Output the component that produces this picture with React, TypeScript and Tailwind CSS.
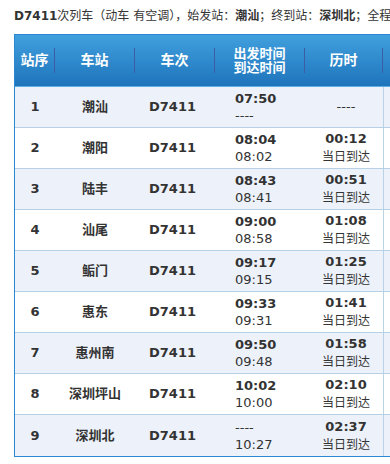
// Train timetable: D7411 stops
const FONT = { fontFamily: '"DejaVu Sans", "Noto Sans CJK SC", sans-serif' };

type Stop = {
  no: number;
  name: string;
  train: string;
  dep: string;
  arr: string;
  span: string;
  note?: string;
};

const stops: Stop[] = [
  { no: 1, name: '潮汕', train: 'D7411', dep: '07:50', arr: '----', span: '----' },
  { no: 2, name: '潮阳', train: 'D7411', dep: '08:04', arr: '08:02', span: '00:12', note: '当日到达' },
  { no: 3, name: '陆丰', train: 'D7411', dep: '08:43', arr: '08:41', span: '00:51', note: '当日到达' },
  { no: 4, name: '汕尾', train: 'D7411', dep: '09:00', arr: '08:58', span: '01:08', note: '当日到达' },
  { no: 5, name: '鲘门', train: 'D7411', dep: '09:17', arr: '09:15', span: '01:25', note: '当日到达' },
  { no: 6, name: '惠东', train: 'D7411', dep: '09:33', arr: '09:31', span: '01:41', note: '当日到达' },
  { no: 7, name: '惠州南', train: 'D7411', dep: '09:50', arr: '09:48', span: '01:58', note: '当日到达' },
  { no: 8, name: '深圳坪山', train: 'D7411', dep: '10:02', arr: '10:00', span: '02:10', note: '当日到达' },
  { no: 9, name: '深圳北', train: 'D7411', dep: '----', arr: '10:27', span: '02:37', note: '当日到达' },
];

function Divider() {
  return <div className="w-px h-[25px] bg-[#3c5ca4] shrink-0" />;
}

export default function App() {
  return (
    <div className="w-[390px] h-[464px] overflow-hidden bg-white text-[#333]" style={FONT}>
      {/* summary line */}
      <div className="h-[34px] w-[390px] overflow-hidden pl-[14px] pt-[7px] text-[12px] leading-[18px] whitespace-nowrap">
        <b>D7411</b>次列车（动车 有空调），始发站：<b>潮汕</b>；终到站：<b>深圳北</b>；全程
      </div>

      {/* table */}
      <div className="ml-[14px] w-[470px] border-l border-t border-b border-[#2a88d4]">
        {/* header */}
        <div className="flex items-center h-[52px] bg-linear-to-b from-[#41a0de] to-[#1e74bb] border-b border-[#62ade3] text-white font-bold text-[14px]">
          <div className="w-[39px] text-center">站序</div>
          <Divider />
          <div className="w-[79px] text-center">车站</div>
          <Divider />
          <div className="w-[79px] text-center">车次</div>
          <Divider />
          <div className="w-[89px] text-center text-[13px] leading-[14px]">
            <div>出发时间</div>
            <div>到达时间</div>
          </div>
          <Divider />
          <div className="w-[77px] text-center">历时</div>
          <Divider />
          <div className="w-[100px]" />
        </div>

        {/* rows */}
        {stops.map((s, i) => (
          <div
            key={s.no}
            className={`flex items-center h-[41px] text-[13px] border-b border-[#b6d1e6] last:border-b-0 ${
              i % 2 === 0 ? 'bg-[#edf1f9]' : 'bg-white'
            }`}
          >
            <div className="w-[40px] text-center font-bold">{s.no}</div>
            <div className="w-[80px] text-center font-bold">{s.name}</div>
            <div className="w-[80px] pl-[14px] font-bold">{s.train}</div>
            <div className="w-[90px] pl-[20px] leading-[17px]">
              <div className={s.dep === '----' ? '' : 'font-bold'}>{s.dep}</div>
              <div>{s.arr}</div>
            </div>
            <div className="w-[78px] h-full flex flex-col items-center justify-center pl-[4px] leading-[18px]">
              {s.note ? (
                <>
                  <div className="font-bold">{s.span}</div>
                  <div className="text-[12px]">{s.note}</div>
                </>
              ) : (
                <div>{s.span}</div>
              )}
            </div>
            <div className="w-px h-full bg-[#b8d3e6]" />
            <div className="w-[100px]" />
          </div>
        ))}
      </div>
    </div>
  );
}
